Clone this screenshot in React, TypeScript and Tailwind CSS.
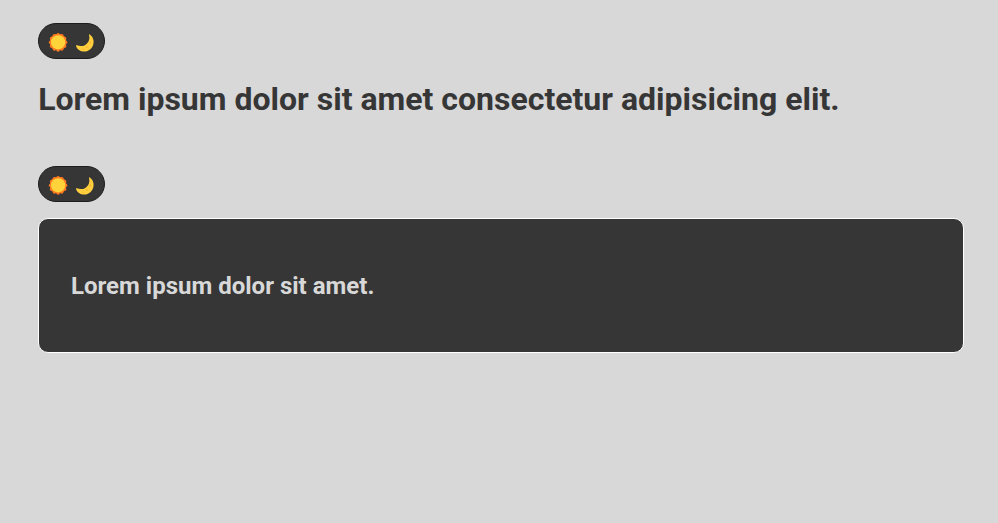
import React from "react";

const rays = Array.from({ length: 12 }, (_, i) => {
  const a = (i * Math.PI) / 6;
  return { x: 9.5 + 7.6 * Math.sin(a), y: 9.5 - 7.8 * Math.cos(a) };
});

function Sun() {
  return (
    <svg className="h-[19px] w-[19px] shrink-0 overflow-visible" viewBox="0.4 0.2 19 19" aria-hidden="true">
      <g fill="#ff7b22">
        <circle cx="9.5" cy="9.5" r="8.5" />
        {rays.map((p, i) => (
          <circle key={i} cx={p.x} cy={p.y} r="1.6" />
        ))}
      </g>
      <circle cx="9.5" cy="9.5" r="7.1" fill="#ffd43a" />
    </svg>
  );
}

function Moon() {
  return (
    <svg className="h-[19px] w-[19px] shrink-0 overflow-visible" viewBox="0.5 0 19 19" aria-hidden="true">
      <path
        d="M14.2 1.4C17.7 3.8 19 8 17.6 12C16 16.6 11.8 19.1 7.4 18.5C4.2 18.1 1.5 16.1.5 12.9C.3 12.2.8 12 1.4 12.3C5.8 14.1 10.2 12.9 12.7 8.9C14.1 6.7 14.1 4.1 13.5 1.9C13.4 1.4 13.8 1.2 14.2 1.4Z"
        fill="#ffce3e"
      />
      <g fill="#f5b52f">
        <ellipse cx="14.8" cy="9.6" rx=".9" ry="1.1" />
        <ellipse cx="11.6" cy="14" rx="1.3" ry=".8" />
        <circle cx="7.5" cy="16.2" r=".8" />
      </g>
    </svg>
  );
}

function ThemeToggle() {
  return (
    <button
      type="button"
      aria-label="Toggle theme"
      className="flex h-9 w-[67px] items-center gap-2 rounded-full border border-[#1c1c1c] bg-[#363636] pt-[2px] pl-[10px]"
    >
      <Sun />
      <Moon />
    </button>
  );
}

export default function App() {
  return (
    <main className="min-h-screen bg-[#d8d8d8] pt-[23px] pr-[34px] pl-[38px] font-['Roboto',sans-serif] text-[#363636]">
      <ThemeToggle />
      <h1 className="mt-5 pl-[0.2px] text-[32px] leading-10 font-bold">
        Lorem ipsum dolor sit amet consectetur adipisicing elit.
      </h1>
      <section className="mt-[47px]">
        <ThemeToggle />
        <div className="mt-4 flex h-[135px] items-center rounded-[10px] border border-white bg-[#363636] px-8 text-[#d8d8d8]">
          <h2 className="text-2xl leading-7 font-bold">Lorem ipsum dolor sit amet.</h2>
        </div>
      </section>
    </main>
  );
}
